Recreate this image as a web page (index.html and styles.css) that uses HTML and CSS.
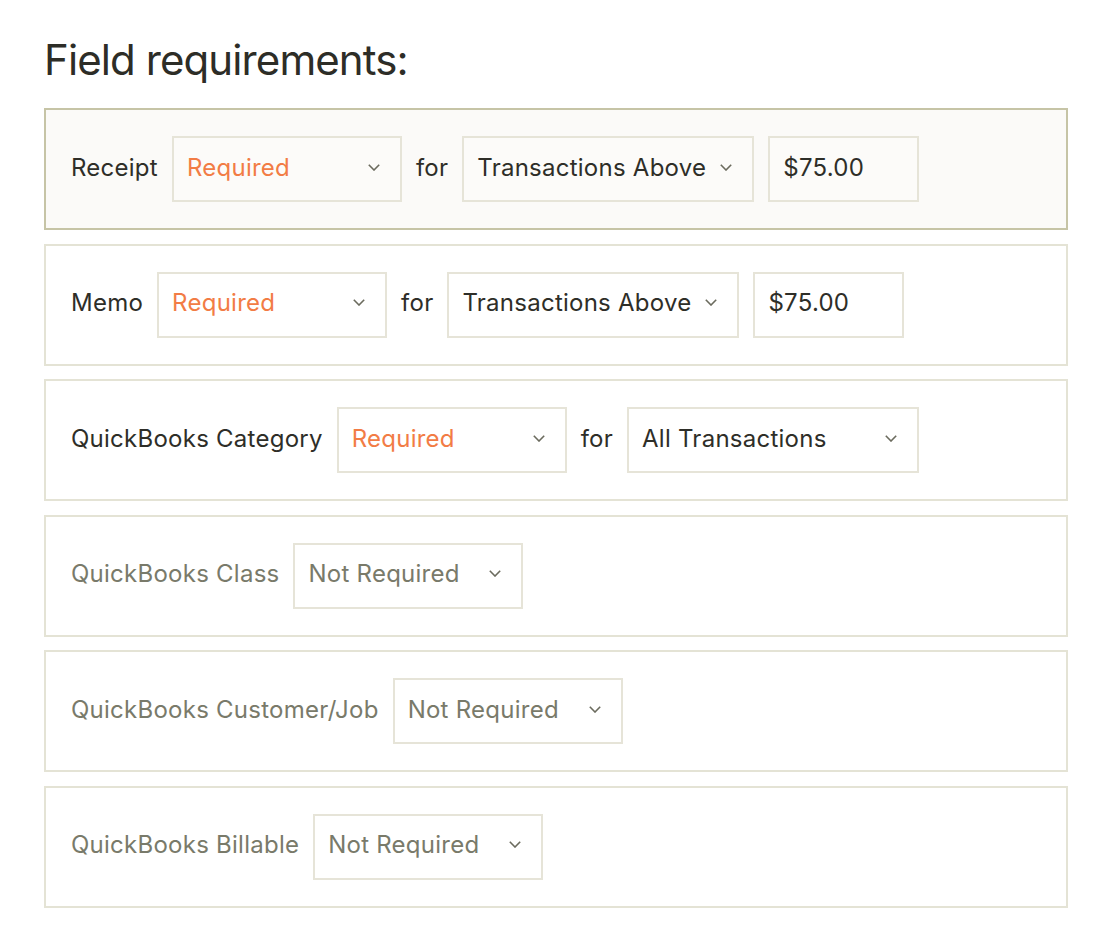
FILE: index.html
```html
<!DOCTYPE html>
<html lang="en">
<head>
    <meta charset="UTF-8">
    <meta name="viewport" content="width=device-width, initial-scale=1.0">
    <title>Field requirements</title>
    <link rel="stylesheet" href="styles.css">
</head>
<body>
    <div class="page">
        <h2 class="title">Field requirements:</h2>

        <div class="field-list">
            <div class="field active">
                <span class="label">Receipt</span>
                <div class="select req">
                    <span>Required</span>
                    <svg class="chevron" viewBox="0 0 12 7"><path d="M0.8 0.8l5.2 5.2 5.2-5.2"/></svg>
                </div>
                <span class="label">for</span>
                <div class="select wide">
                    <span>Transactions Above</span>
                    <svg class="chevron" viewBox="0 0 12 7"><path d="M0.8 0.8l5.2 5.2 5.2-5.2"/></svg>
                </div>
                <div class="amount">$75.00</div>
            </div>

            <div class="field">
                <span class="label">Memo</span>
                <div class="select req">
                    <span>Required</span>
                    <svg class="chevron" viewBox="0 0 12 7"><path d="M0.8 0.8l5.2 5.2 5.2-5.2"/></svg>
                </div>
                <span class="label">for</span>
                <div class="select wide">
                    <span>Transactions Above</span>
                    <svg class="chevron" viewBox="0 0 12 7"><path d="M0.8 0.8l5.2 5.2 5.2-5.2"/></svg>
                </div>
                <div class="amount">$75.00</div>
            </div>

            <div class="field">
                <span class="label">QuickBooks Category</span>
                <div class="select req">
                    <span>Required</span>
                    <svg class="chevron" viewBox="0 0 12 7"><path d="M0.8 0.8l5.2 5.2 5.2-5.2"/></svg>
                </div>
                <span class="label">for</span>
                <div class="select wide">
                    <span>All Transactions</span>
                    <svg class="chevron" viewBox="0 0 12 7"><path d="M0.8 0.8l5.2 5.2 5.2-5.2"/></svg>
                </div>
            </div>

            <div class="field off">
                <span class="label">QuickBooks Class</span>
                <div class="select">
                    <span>Not Required</span>
                    <svg class="chevron" viewBox="0 0 12 7"><path d="M0.8 0.8l5.2 5.2 5.2-5.2"/></svg>
                </div>
            </div>

            <div class="field off">
                <span class="label">QuickBooks Customer/Job</span>
                <div class="select">
                    <span>Not Required</span>
                    <svg class="chevron" viewBox="0 0 12 7"><path d="M0.8 0.8l5.2 5.2 5.2-5.2"/></svg>
                </div>
            </div>

            <div class="field off">
                <span class="label">QuickBooks Billable</span>
                <div class="select">
                    <span>Not Required</span>
                    <svg class="chevron" viewBox="0 0 12 7"><path d="M0.8 0.8l5.2 5.2 5.2-5.2"/></svg>
                </div>
            </div>
        </div>
    </div>
</body>
</html>
```

FILE: styles.css
```css
body {
    font-family: Inter, "Noto Sans", sans-serif;
    background-color: #ffffff;
    color: #2e2e28;
    margin: 0;
    padding: 0;
}
.page {
    width: 1024px;
    padding: 35px 0 0 44px;
}
.title {
    margin: 0 0 23px 0;
    font-size: 42px;
    line-height: 50px;
    font-weight: 400;
    letter-spacing: -0.9px;
    color: #2d2d27;
}
.field-list {
    display: flex;
    flex-direction: column;
    gap: 13.5px;
}
.field {
    display: flex;
    align-items: center;
    gap: 14px;
    height: 118px;
    padding: 0 25px;
    border: 2px solid #e4e3d5;
    background-color: #ffffff;
    font-size: 24px;
    letter-spacing: 0.25px;
}
.field.active {
    border-color: #c6c4a6;
    background-color: #fbfaf8;
}
.label {
    color: #2e2e28;
    padding-bottom: 4px;
}
.field.off .label,
.field.off .select {
    color: #797a6a;
}
.select {
    display: flex;
    align-items: center;
    justify-content: space-between;
    box-sizing: border-box;
    width: 230px;
    height: 66px;
    padding: 0 20px 4px 13px;
    border: 2px solid #e6e4d8;
    background-color: #ffffff;
    color: #2e2e28;
}
.field.active .select,
.field.active .amount {
    background-color: #fcfbf9;
}
.select.req {
    color: #f27c45;
}
.select.wide {
    width: 292px;
}
.chevron {
    width: 12px;
    height: 7px;
    fill: none;
    stroke: #6b6b5e;
    stroke-width: 1.6;
}
.amount {
    display: flex;
    align-items: center;
    box-sizing: border-box;
    width: 151px;
    height: 66px;
    padding: 0 13px 4px;
    border: 2px solid #e6e4d8;
    background-color: #ffffff;
}
```
